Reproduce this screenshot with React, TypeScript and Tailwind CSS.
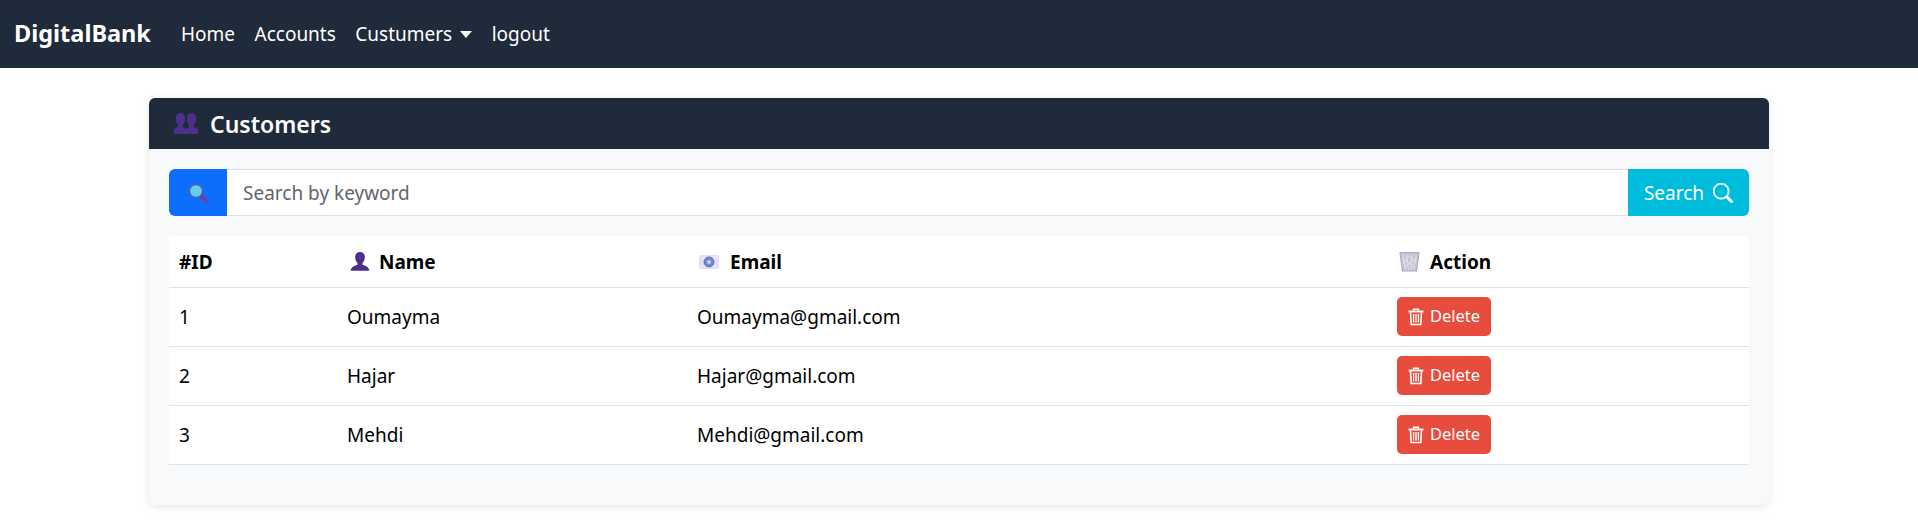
import { BsSearch } from 'react-icons/bs'

type Customer = {
  id: number
  name: string
  email: string
}

const customers: Customer[] = [
  { id: 1, name: 'Oumayma', email: 'Oumayma@gmail.com' },
  { id: 2, name: 'Hajar', email: 'Hajar@gmail.com' },
  { id: 3, name: 'Mehdi', email: 'Mehdi@gmail.com' },
]

function PersonIcon({ className }: { className?: string }) {
  return (
    <svg viewBox="0 0 20 20" preserveAspectRatio="none" className={className}>
      <path
        fill="#4f2f8c"
        d="M10 1c3 0 4.600 2.200 4.400 5.200-.1 2-1 3.800-2.200 4.900v1.400c2.600.7 5.800 1.700 6.300 5.500H1.500c.5-3.800 3.700-4.800 6.300-5.500v-1.400C6.600 10 5.700 8.200 5.600 6.200 5.400 3.200 7 1 10 1z"
      />
    </svg>
  )
}

function GroupIcon() {
  return (
    <svg viewBox="0 0 24 21" className="h-[21px] w-[24px] shrink-0">
      <path
        fill="#4f2f8c"
        d="M6.500 0C10 0 11 2.500 11 5.500c0 3-.9 5.500-2 6.800V14l3 2 3-2v-1.700c-1.100-1.300-2-3.800-2-6.800C13 2.500 14 0 17.500 0S22 2.500 22 5.500c0 3-.9 5.500-2 6.800V14c2 .6 4 1.300 4 3v4H0v-4c0-1.700 2-2.400 4-3v-1.700C2.900 11 2 8.500 2 5.500 2 2.500 3 0 6.500 0z"
      />
    </svg>
  )
}

function LensIcon() {
  return (
    <svg viewBox="0 0 20 20" className="h-[20px] w-[20px]">
      <path d="M12 12l6 6" stroke="#7c3f8c" strokeWidth="3.500" strokeLinecap="round" />
      <circle cx="8" cy="8" r="6.500" fill="#62cfee" stroke="#5f5a9c" strokeWidth="1.300" />
    </svg>
  )
}

function MailIcon() {
  return (
    <svg viewBox="0 0 20 14" className="h-[14px] w-[20px]">
      <rect width="20" height="14" fill="#e3dff5" />
      <path d="M0 0l7 6M20 0l-7 6M0 14l7-5M20 14l-7-5" stroke="#f3f1fb" strokeWidth="1" />
      <circle cx="10" cy="7" r="5" fill="#6f86d6" stroke="#5a62b0" strokeWidth="0.800" />
      <circle cx="10" cy="7" r="2" fill="#c5d2f5" />
    </svg>
  )
}

function BasketIcon() {
  return (
    <svg viewBox="0 0 20 20" className="h-[21px] w-[21px]">
      <path d="M1 1.500h18l-2.200 17.500H3.200z" fill="#c4c4d6" stroke="#a9a9c0" strokeWidth="1" />
      <path
        d="M3.500 4l3 14M7.500 4l1.500 14M12.500 4L11 18M16.500 4l-3 14M3 7l12.800 9M17 7L4.200 16M3.500 12l7-8M16.500 12l-7-8"
        stroke="#e9e9f2"
        strokeWidth="0.700"
      />
    </svg>
  )
}

function TrashIcon() {
  return (
    <svg viewBox="0 0 16 18" fill="none" stroke="currentColor" className="h-[18px] w-[16px]">
      <path d="M0.500 3.500h15" strokeWidth="1.800" />
      <path d="M5.500 3V1.300h5V3" strokeWidth="1.400" />
      <path d="M2.500 4l.7 12.500h9.600L13.500 4" strokeWidth="1.600" />
      <path d="M5.600 6v8.500M8 6v8.500M10.400 6v8.500" strokeWidth="1.300" />
    </svg>
  )
}

export default function App() {
  return (
    <div className="min-h-[525px] bg-white font-['Noto_Sans','Open_Sans',sans-serif] text-[19px] text-black">
      <nav className="flex h-[68px] items-center bg-[#1f2a3a] pl-[14px] text-white">
        <span className="mr-[30px] text-[23.5px] font-bold">DigitalBank</span>
        <ul className="flex items-center gap-[19.5px]">
          <li>Home</li>
          <li>Accounts</li>
          <li className="flex items-center gap-[8px]">
            Custumers
            <span className="mt-[1px] border-x-[6px] border-t-[7px] border-x-transparent border-t-white" />
          </li>
          <li>logout</li>
        </ul>
      </nav>

      <main className="px-[149px] pt-[30px]">
        <section className="h-[407px] rounded-[6px] bg-[#f8f9fa] shadow-[0_2px_8px_rgba(0,0,0,0.1)]">
          <header className="flex h-[51px] items-center gap-[12px] rounded-t-[6px] bg-[#1f2a3a] pl-[25px] text-[23px] font-semibold text-white">
            <GroupIcon />
            <span className="pt-[2px]">Customers</span>
          </header>

          <div className="p-[20px]">
            <div className="flex h-[47px]">
              <span className="flex w-[58px] items-center justify-center rounded-l-[6px] bg-[#0d6efd]">
                <LensIcon />
              </span>
              <input
                type="text"
                placeholder="Search by keyword"
                className="min-w-0 flex-1 border-y border-[#dee2e6] bg-white px-[16px] pt-[2px] text-[19px] outline-none placeholder:text-[#5f666d]"
              />
              <button className="flex w-[121px] items-center justify-center gap-[9px] rounded-r-[6px] bg-[#00bcdc] text-white">
                <span className="pt-[2px]">Search</span>
                <BsSearch className="h-[20px] w-[20px] stroke-[0.4]" />
              </button>
            </div>

            <table className="mt-[20px] w-full table-fixed border-collapse bg-white">
              <thead>
                <tr className="h-[51px] border-b border-[#dee2e6] font-bold">
                  <th className="w-[170px] px-[10px] pt-[1px] text-left">#ID</th>
                  <th className="w-[350px] px-[5px] text-left">
                    <span className="flex items-center gap-[8px] pl-[5px] pt-[1px]">
                      <PersonIcon className="h-[22px] w-[22px]" />
                      Name
                    </span>
                  </th>
                  <th className="w-[700px] px-[5px] text-left">
                    <span className="flex items-center gap-[11px] pl-[5px] pt-[1px]">
                      <MailIcon />
                      Email
                    </span>
                  </th>
                  <th className="px-[5px] text-left">
                    <span className="flex items-center gap-[10px] pl-[5px] pt-[1px]">
                      <BasketIcon />
                      Action
                    </span>
                  </th>
                </tr>
              </thead>
              <tbody>
                {customers.map((customer) => (
                  <tr key={customer.id} className="h-[59px] border-b border-[#dee2e6]">
                    <td className="px-[10px] pt-[2px]">{customer.id}</td>
                    <td className="px-[8px] pt-[2px]">{customer.name}</td>
                    <td className="px-[8px] pt-[2px]">{customer.email}</td>
                    <td className="px-[8px]">
                      <button className="flex h-[39px] w-[94px] items-center justify-center gap-[6px] rounded-[5px] bg-[#e74c3c] text-[16.5px] text-white">
                        <TrashIcon />
                        Delete
                      </button>
                    </td>
                  </tr>
                ))}
              </tbody>
            </table>
          </div>
        </section>
      </main>
    </div>
  )
}
